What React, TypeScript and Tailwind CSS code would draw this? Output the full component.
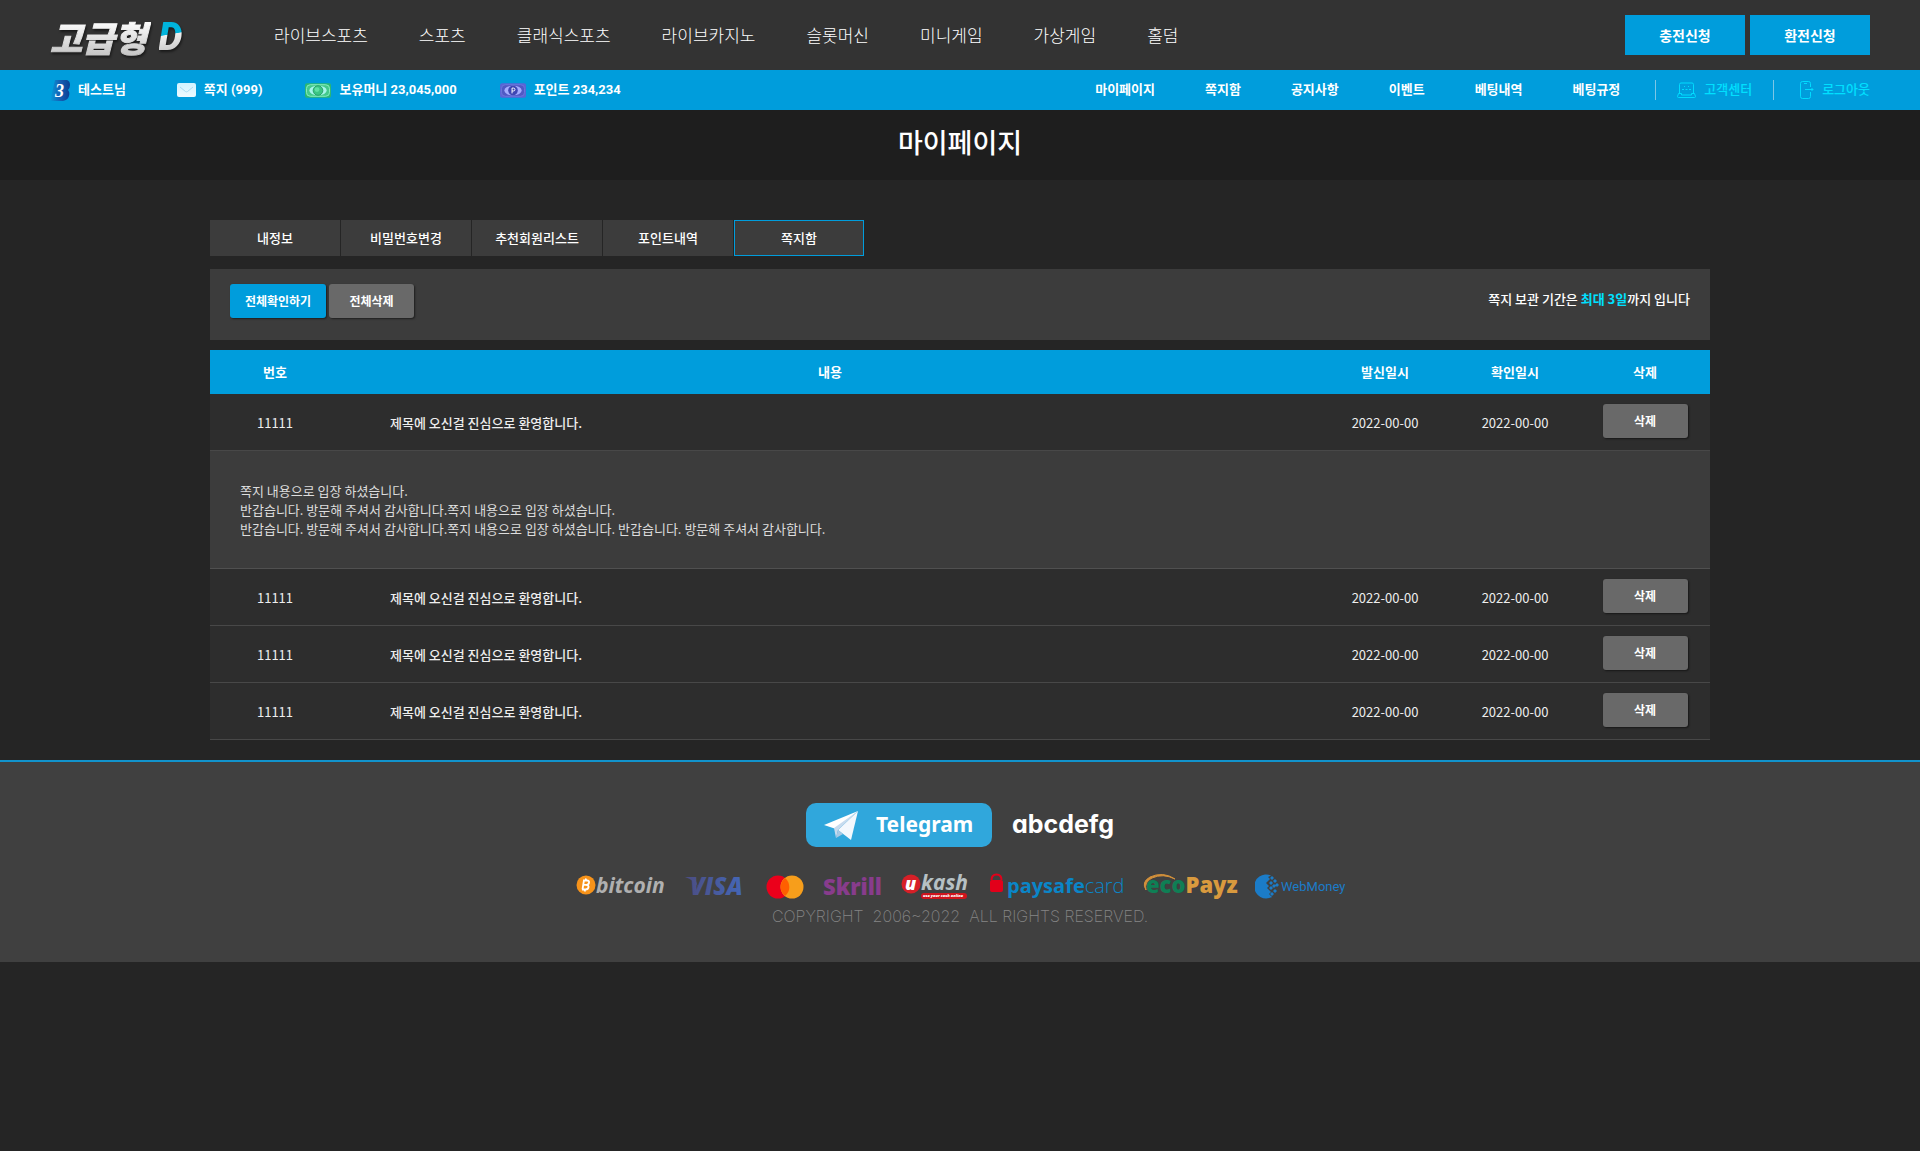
const nav = ["라이브스포츠", "스포츠", "클래식스포츠", "라이브카지노", "슬롯머신", "미니게임", "가상게임", "홀덤"];
const sub = ["마이페이지", "쪽지함", "공지사항", "이벤트", "베팅내역", "베팅규정"];
const tabs = ["내정보", "비밀번호변경", "추천회원리스트", "포인트내역", "쪽지함"];
const body = [
  "쪽지 내용으로 입장 하셨습니다.",
  "반갑습니다. 방문해 주셔서 감사합니다.쪽지 내용으로 입장 하셨습니다.",
  "반갑습니다. 방문해 주셔서 감사합니다.쪽지 내용으로 입장 하셨습니다. 반갑습니다. 방문해 주셔서 감사합니다.",
];
const messages = [
  { id: "11111", title: "제목에 오신걸 진심으로 환영합니다.", sent: "2022-00-00", read: "2022-00-00", open: true },
  { id: "11111", title: "제목에 오신걸 진심으로 환영합니다.", sent: "2022-00-00", read: "2022-00-00", open: false },
  { id: "11111", title: "제목에 오신걸 진심으로 환영합니다.", sent: "2022-00-00", read: "2022-00-00", open: false },
  { id: "11111", title: "제목에 오신걸 진심으로 환영합니다.", sent: "2022-00-00", read: "2022-00-00", open: false },
];

function LevelIcon() {
  return (
    <svg width="20" height="21" viewBox="0 0 20 21" aria-hidden="true">
      <defs>
        <linearGradient id="lv" x1="0" x2="1" y1="0" y2="0">
          <stop offset="0" stopColor="#049ddb" />
          <stop offset="0.5" stopColor="#1560b4" />
          <stop offset="1" stopColor="#0a3f94" />
        </linearGradient>
      </defs>
      <path d="M5 0H17Q20 1 20 5Q20 8 18 10Q20 12 19 16Q18 20 13 21H0Z" fill="url(#lv)" />
      <text x="5" y="17" fontFamily="Liberation Serif, serif" fontSize="18" fontStyle="italic" fontWeight="700" fill="#fff">3</text>
    </svg>
  );
}

function MailIcon() {
  return (
    <svg width="19" height="14" viewBox="0 0 19 14" aria-hidden="true">
      <defs>
        <linearGradient id="mail" x1="0" x2="0" y1="0" y2="1">
          <stop offset="0" stopColor="#d2f3ff" />
          <stop offset="1" stopColor="#eefaff" />
        </linearGradient>
      </defs>
      <rect width="19" height="14" rx="2" fill="url(#mail)" />
      <path d="M3 4 8.500 8.500Q9.500 9.200 10.500 8.500L16 4" fill="none" stroke="#a9dcf3" />
    </svg>
  );
}

function CashIcon() {
  return (
    <svg width="26" height="15" viewBox="0 0 27 15" aria-hidden="true">
      <rect width="27" height="15" rx="2" fill="#2bb673" />
      <rect x="1.5" y="1.5" width="24" height="12" rx="4" fill="#44c98c" stroke="#8df0c0" />
      <ellipse cx="13.5" cy="7.5" rx="9" ry="5" fill="#a6f5ea" />
      <circle cx="13.5" cy="7.5" r="5" fill="#3cc584" stroke="#25a067" />
      <circle cx="12.5" cy="6.5" r="2.500" fill="#5fe0a3" />
    </svg>
  );
}

function PointIcon() {
  return (
    <svg width="26" height="15" viewBox="0 0 27 15" aria-hidden="true">
      <rect width="27" height="15" rx="2" fill="#5a64d6" />
      <rect x="1.5" y="1.5" width="24" height="12" rx="4" fill="#5059c4" stroke="#6c77dc" />
      <ellipse cx="13.5" cy="7.5" rx="9" ry="5" fill="#a4acff" />
      <circle cx="13.5" cy="7.5" r="5" fill="#3f47b4" />
      <path d="M12.500 10.500V5H14Q15.500 5 15.500 6.500T14 8H12.500" fill="none" stroke="#fff" />
    </svg>
  );
}

function SupportIcon() {
  return (
    <svg width="19" height="16" viewBox="0 0 19 16" fill="none" stroke="#00dcff" aria-hidden="true">
      <path d="M2.500 11V2.500Q2.500 1 4 1H15Q16.500 1 16.500 2.500V11" />
      <path d="M1.500 11.500H4.500V13H14.500V11.500H17.500L18.500 14.500Q18.500 15.500 17.500 15.500H1.500Q.5 15.500 .5 14.500Z" />
      <path d="M5 7.500H7M8.500 7.500H10.500M12 7.500H14M7 4.500H8M11 4.500H12" />
    </svg>
  );
}

function LogoutIcon() {
  return (
    <svg width="14" height="18" viewBox="0 0 14 18" fill="none" stroke="#00dcff" aria-hidden="true">
      <path d="M10.500 6V2.500Q10.500.5 8.500.5H2.500Q.5.5.5 2.500V15.500Q.5 17.500 2.500 17.500H8.500Q10.500 17.500 10.500 15.500V11" />
      <path d="M5 8.500H13M11.500 7 13 8.500 11.500 10M4 2.500H7" />
    </svg>
  );
}

function TelegramPlane() {
  return (
    <svg width="34" height="29" viewBox="0 0 34 29" aria-hidden="true">
      <path d="M0 14 34 0 12 18Z" fill="#fff" />
      <path d="M34 0 27 29 14 19Z" fill="#f4f8fd" />
      <path d="M34 0 10 17 12 27 14 19Z" fill="#c7dbee" />
      <path d="M12 27 14 19 19 23Z" fill="#a9c9e4" />
    </svg>
  );
}

function Payments() {
  return (
    <div className="flex items-center justify-center gap-[18px]">
      <svg width="90" height="34" viewBox="0 -3 90 34" role="img" aria-label="bitcoin">
        <circle cx="10" cy="12" r="9.500" fill="#f7931a" />
        <path d="M8 7 6.500 16.500M7 7.500H11Q13.500 7.500 13 9.800T10 11.800H7.500M10 11.800Q13 12 12.500 14.300T9.500 16.500H6M10 5.500 9.700 7.500M9 16.500 8.700 18.500" fill="none" stroke="#fff" strokeWidth="1.800" />
        <text x="20" y="20" fontFamily="Open Sans" fontSize="21" fontWeight="700" fontStyle="italic" fill="#b0b0b0">bitcoin</text>
      </svg>
      <svg width="64" height="34" viewBox="0 -3 64 34" role="img" aria-label="VISA">
        <defs>
          <linearGradient id="visa" x1="0" x2="1"><stop offset="0" stopColor="#4b4f86" /><stop offset="1" stopColor="#4467b8" /></linearGradient>
        </defs>
        <path d="M1 4H10L12 8 14 14Q10 7 1 4Z" fill="#4b4f86" />
        <text x="6" y="22" fontFamily="Open Sans" fontSize="24" fontWeight="800" fontStyle="italic" fill="url(#visa)">VISA</text>
      </svg>
      <svg width="39" height="34" viewBox="0 -3 39 34" role="img" aria-label="mastercard">
        <circle cx="12" cy="14" r="11.500" fill="#eb001b" />
        <circle cx="26" cy="14" r="11.500" fill="#f79e1b" />
        <path d="M19 5A11.500 11.500 0 0 1 19 23A11.500 11.500 0 0 1 19 5Z" fill="#ff5f00" />
      </svg>
      <svg width="60" height="34" viewBox="0 -3 60 34" role="img" aria-label="Skrill">
        <text x="0" y="22" fontFamily="Open Sans" fontSize="22" fontWeight="800" fill="#883c8c">Skrill</text>
      </svg>
      <svg width="71" height="34" viewBox="0 -3 71 34" role="img" aria-label="Ukash">
        <circle cx="10" cy="11" r="9.500" fill="#d71f27" />
        <text x="4" y="17" fontFamily="Open Sans" fontSize="18" fontWeight="800" fontStyle="italic" fill="#fff">u</text>
        <text x="20" y="17" fontFamily="Open Sans" fontSize="21" fontWeight="700" fontStyle="italic" fill="#b6c0c4">kash</text>
        <rect x="20" y="20" width="46" height="6" rx="3" fill="#d0141c" />
        <text x="22" y="24" fontFamily="Open Sans" fontSize="4" fontWeight="800" fontStyle="italic" fill="#fff">use your cash online</text>
      </svg>
      <svg width="135" height="34" viewBox="0 -3 135 34" role="img" aria-label="paysafecard">
        <rect x="0" y="7" width="13" height="12" rx="2" fill="#e2001a" />
        <path d="M1.500 7Q1.500 1.500 6.500 1.500T11.500 7" fill="none" stroke="#e2001a" strokeWidth="2" />
        <text x="17" y="20" fontFamily="Open Sans" fontSize="20" fontWeight="700" fill="#0a86c8">paysafe<tspan fontWeight="300">card</tspan></text>
      </svg>
      <svg width="98" height="34" viewBox="0 -3 98 34" role="img" aria-label="ecoPayz" className="-mr-1">
        <path d="M3 17Q-2 9 7 4Q20-2 32 6Q20 0 9 5Q1 9 3 17Z" fill="#d2903a" stroke="#d2903a" />
        <text x="3" y="20" fontFamily="Open Sans" fontSize="22" fontWeight="800" fill="#0f7f55">eco<tspan fill="#d99a3e">Payz</tspan></text>
      </svg>
      <svg width="90" height="34" viewBox="0 -3 90 34" role="img" aria-label="WebMoney">
        <path d="M16 2.500A12 12 0 1 0 17 24L14 21 16 19 12 15 14 13 11 10 15 6 13 4Z" fill="#1b7cc8" />
        <path d="m17 3 2 2-2 2-2-2ZM20 6l2 2-2 2-2-2ZM16 8l2 2-2 2-2-2ZM19 11l2 2-2 2-2-2ZM22 10l2 2-2 2-2-2ZM16 13l2 2-2 2-2-2ZM20 16l2 2-2 2-2-2ZM17 19l2 2-2 2-2-2Z" fill="#1b7cc8" />
        <text x="26" y="18" fontFamily="Roboto" fontSize="13" fill="#1b7cc8">WebMoney</text>
      </svg>
    </div>
  );
}

const greyButton = "h-[34px] w-[85px] rounded-[3px] bg-[#696969] text-xs font-bold text-white shadow-[1px_1px_2px_rgba(0,0,0,0.5)]";

export default function App() {
  return (
    <div className="min-h-screen bg-[#252525] font-['Noto_Sans_CJK_KR',sans-serif] text-[13px] text-white">
      <header>
        <div className="flex h-[70px] items-center bg-[#333] px-[50px]">
          <a href="#" className="flex w-[224px] shrink-0 items-center gap-2 italic drop-shadow-[1px_2px_1px_rgba(0,0,0,0.5)]">
            <span className="bg-gradient-to-b from-white from-30% to-[#c4c4c4] to-80% bg-clip-text pt-1 pr-1 text-[35px] leading-[66px] font-black text-transparent [-webkit-text-stroke:1px_transparent]">고급형</span>
            <span className="bg-[linear-gradient(170deg,#00b4dc_48%,#eee_49%,#ccc_70%)] bg-clip-text pt-1 pr-1 font-[Roboto] text-[38px] leading-[66px] font-black text-transparent">D</span>
          </a>
          <nav className="flex flex-1 gap-[51px]">
            {nav.map((n) => (
              <a key={n} href="#" className="text-[17px] font-light whitespace-nowrap">{n}</a>
            ))}
          </nav>
          <div className="flex gap-[5px]">
            <button className="h-10 w-[120px] bg-[#009ddc] text-sm font-bold">충전신청</button>
            <button className="h-10 w-[120px] bg-[#009ddc] text-sm font-bold">환전신청</button>
          </div>
        </div>
        <div className="flex h-10 items-center justify-between bg-[#009ddc] px-[50px] font-[Roboto,'Noto_Sans_CJK_KR',sans-serif] font-bold whitespace-nowrap">
          <div className="flex items-center gap-[43px]">
            <span className="flex items-center gap-2 pr-2"><LevelIcon />테스트님</span>
            <a href="#" className="flex items-center gap-2"><MailIcon />쪽지 (999)</a>
            <span className="flex items-center gap-2"><CashIcon />보유머니 23,045,000</span>
            <span className="flex items-center gap-2"><PointIcon />포인트 234,234</span>
          </div>
          <div className="flex items-center">
            <nav className="flex gap-[50px] pr-[35px]">
              {sub.map((s) => <a key={s} href="#">{s}</a>)}
            </nav>
            <a href="#" className="flex h-5 items-center gap-2 border-l border-[#7dc6e6] px-[21px] font-medium text-[#00e0ff]"><SupportIcon />고객센터</a>
            <a href="#" className="flex h-5 items-center gap-2 border-l border-[#7dc6e6] pl-[26px] font-medium text-[#00e0ff]"><LogoutIcon />로그아웃</a>
          </div>
        </div>
      </header>

      <h1 className="h-[70px] bg-[#1e1e1e] text-center text-[27px] leading-[64px] font-medium">마이페이지</h1>

      <main className="mx-auto max-w-[1500px] pt-10 pb-5">
        <div className="flex gap-px">
          {tabs.map((t, i) => (
            <button key={t} className={i === 4 ? "h-9 w-[130px] border border-[#009ddc] bg-[#3c3c3c] font-medium" : "h-9 w-[130px] bg-[#3c3c3c] font-medium"}>{t}</button>
          ))}
        </div>
        <div className="mt-[13px] flex items-start justify-between bg-[#3c3c3c] px-5 pt-[15px] pb-[22px]">
          <div className="flex gap-[3px]">
            <button className="h-[34px] w-24 rounded-[3px] bg-[#009ddc] text-xs font-bold shadow-[1px_1px_2px_rgba(0,0,0,0.5)]">전체확인하기</button>
            <button className={greyButton}>전체삭제</button>
          </div>
          <p className="leading-[30px] font-medium">쪽지 보관 기간은 <span className="font-bold text-[#00e0ff]">최대 3일</span>까지 입니다</p>
        </div>
        <table className="mt-[10px] w-full table-fixed border-separate border-spacing-0">
          <thead>
            <tr className="h-11 bg-[#009ddc]">
              <th className="w-[130px] font-bold">번호</th>
              <th className="font-bold">내용</th>
              <th className="w-[130px] font-bold">발신일시</th>
              <th className="w-[130px] font-bold">확인일시</th>
              <th className="w-[130px] font-bold">삭제</th>
            </tr>
          </thead>
          {messages.map((m, i) => (
            <tbody key={i}>
              <tr className="h-[57px] bg-[#2d2d2d] text-center text-[#eee]">
                <td className="border-b border-[#484848] pt-[2px]">{m.id}</td>
                <td className="border-b border-[#484848] pt-[2px] pl-[50px] text-left font-medium">{m.title}</td>
                <td className="border-b border-[#484848] pt-[2px]">{m.sent}</td>
                <td className="border-b border-[#484848] pt-[2px]">{m.read}</td>
                <td className="border-b border-[#484848] pb-[2px]"><button className={greyButton}>삭제</button></td>
              </tr>
              {m.open && (
                <tr className="h-[118px] bg-[#3c3c3c] text-[#ddd]">
                  <td colSpan={5} className="border-b border-[#505050] px-[30px] leading-[19px]">
                    {body.map((b) => <p key={b}>{b}</p>)}
                  </td>
                </tr>
              )}
            </tbody>
          ))}
        </table>
      </main>

      <footer className="border-t-2 border-[#1193cc] bg-[#404040] pt-[41px] pb-[34px]">
        <div className="flex items-center justify-center gap-5">
          <a href="#" className="flex h-11 w-[186px] items-center gap-[18px] rounded-[10px] bg-[#30a7dc] pl-[18px] font-['Noto_Sans'] text-[21px] font-bold"><TelegramPlane />Telegram</a>
          <span className="font-[Inter] text-[25px] font-bold [font-feature-settings:'cv11']">abcdefg</span>
        </div>
        <div className="mt-[23px]"><Payments /></div>
        <p className="text-center font-[Inter] text-base leading-6 font-extralight whitespace-pre text-[#858585]">COPYRIGHT  2006~2022  ALL RIGHTS RESERVED.</p>
      </footer>
    </div>
  );
}
